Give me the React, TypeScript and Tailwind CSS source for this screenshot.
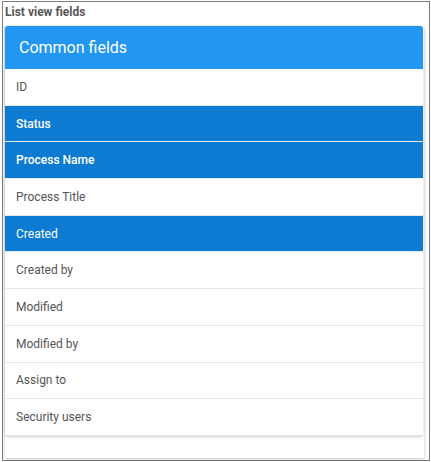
const fields = [
  { label: "ID", selected: false },
  { label: "Status", selected: true, strong: true },
  { label: "Process Name", selected: true, strong: true },
  { label: "Process Title", selected: false },
  { label: "Created", selected: true },
  { label: "Created by", selected: false },
  { label: "Modified", selected: false },
  { label: "Modified by", selected: false },
  { label: "Assign to", selected: false },
  { label: "Security users", selected: false },
];

export default function App() {
  return (
    <div className="w-[431px] h-[462px] bg-white font-['Roboto',sans-serif]">
      <div className="ml-[2px] mt-[1px] w-[428px] h-[460px] border border-[#7d7d7d] pl-[1px]">
        <div className="pl-[1px] h-[24px] pt-[2px] text-[12px] font-bold text-[#555] leading-[16px]">List view fields</div>
        <div className="ml-[1px] w-[419px] h-[432px] bg-white shadow-[0_1px_3px_rgba(0,0,0,0.25)]">
          <div className="w-[418px] rounded-[3px] bg-white shadow-[0_1px_3px_rgba(0,0,0,0.2)]">
            <div className="h-[43px] rounded-t-[3px] bg-[#2196f3] flex items-center pl-[14px] text-[16px] text-white">
              Common fields
            </div>
            <ul>
              {fields.map((f) => (
                <li
                  key={f.label}
                  className={
                    "h-[36.7px] flex items-center pl-[11px] text-[12px] border-b " +
                    (f.selected
                      ? "bg-[#0e7bd3] text-white border-[#e8eef5]"
                      : "bg-white text-[#555] border-[#e6e6e6]") +
                    (f.strong ? " font-medium" : "")
                  }
                >
                  {f.label}
                </li>
              ))}
            </ul>
          </div>
        </div>
      </div>
    </div>
  );
}
